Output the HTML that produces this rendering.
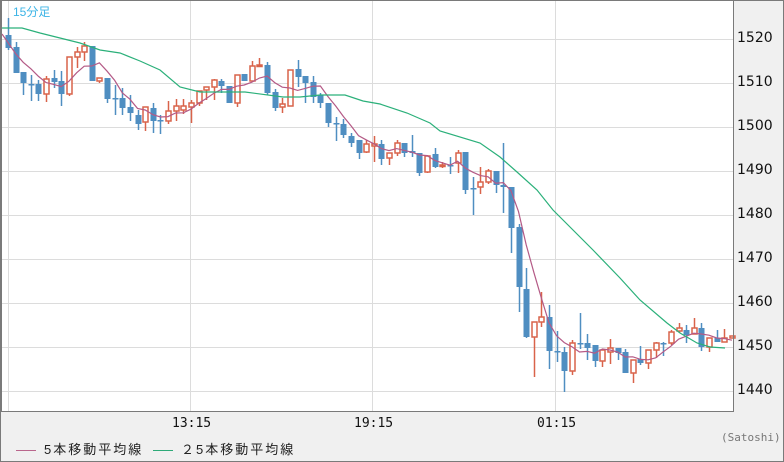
<!DOCTYPE html>
<html><head><meta charset="utf-8"><style>
html,body{margin:0;padding:0;}
body{width:784px;height:462px;background:#f0f0f0;position:relative;overflow:hidden;font-family:"Liberation Sans","Noto Sans CJK JP",sans-serif;}
#frame{position:absolute;left:0;top:0;width:782px;height:460px;border:1px solid #7a7a7a;}
.yl{position:absolute;left:737px;font-size:14px;color:#111;font-family:"DejaVu Sans","Liberation Sans",sans-serif;}
.xl{position:absolute;top:416px;font-size:13px;color:#111;font-family:"DejaVu Sans Mono","Liberation Mono",monospace;}
.lg{position:absolute;top:439px;font-size:13px;color:#222;font-family:"Liberation Sans","Noto Sans CJK JP",sans-serif;letter-spacing:2px;}
</style></head><body>
<div id="frame"></div>
<svg id="c" width="784" height="462" style="position:absolute;left:0;top:0" xmlns="http://www.w3.org/2000/svg"></svg>
<div style="position:absolute;left:13px;top:3px;font-size:12px;color:#3cb4e6;">15分足</div>
<div class="yl" style="top:30px">1520</div>
<div class="yl" style="top:74px">1510</div>
<div class="yl" style="top:118px">1500</div>
<div class="yl" style="top:162px">1490</div>
<div class="yl" style="top:206px">1480</div>
<div class="yl" style="top:250px">1470</div>
<div class="yl" style="top:294px">1460</div>
<div class="yl" style="top:338px">1450</div>
<div class="yl" style="top:382px">1440</div>
<div class="xl" style="left:172px">13:15</div>
<div class="xl" style="left:354px">19:15</div>
<div class="xl" style="left:537px">01:15</div>
<div class="lg" style="left:16px"><span style="display:inline-block;width:20px;height:1px;background:#b9668c;vertical-align:middle;margin-right:8px"></span>5本移動平均線</div>
<div class="lg" style="left:153px"><span style="display:inline-block;width:20px;height:1px;background:#2eaa78;vertical-align:middle;margin-right:8px"></span>２5本移動平均線</div>
<div style="position:absolute;left:721px;top:431px;font-size:11px;color:#777;font-family:'DejaVu Sans Mono',monospace;">(Satoshi)</div>
<script>
var s=document.getElementById('c'),h='';
h+='<rect x="2" y="1" width="731" height="410" fill="#fff"/>';
[39,83,127,171,215,259,303,347,391].forEach(function(y){h+='<line x1="2" x2="733" y1="'+(y+0.5)+'" y2="'+(y+0.5)+'" stroke="#dcdcdc"/>';});
[8,190,372,555].forEach(function(x){h+='<line y1="1" y2="411" x1="'+(x+0.5)+'" x2="'+(x+0.5)+'" stroke="#dcdcdc"/>';});
// [open, close, high, low] in pixel y
var d=[[35,48,18,50],[47,73,42,73],[72,83,72,95],[84,84,75,101],[84,94,80,101],[94,79,76,102],[78,82,70,88],[81,94,71,106],[94,57,57,96],[57,52,47,68],[52,46,42,61],[46,81,46,81],[81,78,78,83],[78,99,78,103],[98,98,85,115],[98,108,88,115],[107,113,95,121],[115,124,110,130],[122,107,107,131],[108,121,103,133],[120,120,115,134],[121,111,101,124],[111,106,99,121],
[110,106,99,114],[107,103,100,123],[103,91,91,106],[90,87,87,100],[87,80,79,100],[81,86,79,93],[86,103,86,103],[103,75,75,107],[74,81,74,81],[81,66,61,81],[66,65,58,66],[65,93,62,95],[92,108,89,111],[107,104,98,113],[106,70,70,106],[69,77,60,87],[76,83,76,103],[82,97,76,103],[95,103,93,108],[103,123,103,127],[123,124,117,141],[124,135,119,138],[136,143,133,147],[140,153,140,159],[152,144,140,153],[146,144,136,162],[144,159,140,165],[158,153,153,165],[153,143,140,156],[143,153,143,157],[151,153,135,157],[153,173,153,176],[172,156,155,173],
[154,167,148,168],[166,165,162,168],[165,165,157,174],[163,153,150,173],[152,190,152,194],[188,188,177,215],[187,182,167,194],[182,171,169,184],[171,185,171,193],[185,187,143,213],[187,228,187,253],[227,287,224,312],[289,337,268,338],[337,322,322,377],[322,317,292,327],[317,351,305,369],[351,352,331,362],[352,371,347,392],[371,343,340,375],[343,343,313,349],[343,348,334,360],[345,361,345,367],[361,350,350,367],[352,348,339,364],[348,353,348,360],[352,373,349,373],[373,360,360,383],[359,363,346,365],[363,350,350,369],[350,343,342,358],[343,343,342,356],[343,332,330,345],[331,328,323,333],[330,335,325,343],[334,328,318,334],[328,347,323,351],[347,338,338,352],[338,342,330,342],[342,338,329,342],[338,336,336,338]];
var cl=[];
d.forEach(function(c,i){var x=8+i*7.62,cx=Math.round(x)+0.5;var up=c[1]<c[0];var col=up?'#d9634a':'#4f8ec1';
h+='<line x1="'+cx+'" x2="'+cx+'" y1="'+c[2]+'" y2="'+c[3]+'" stroke="'+col+'" stroke-width="1.5"/>';
var t=Math.min(c[0],c[1]),b=Math.max(c[0],c[1]);if(b-t<1.5){b=t+1.5;}
if(up)h+='<rect x="'+(cx-2.5)+'" y="'+t+'" width="5" height="'+(b-t)+'" fill="#fff" stroke="'+col+'" stroke-width="1.5"/>';
else h+='<rect x="'+(cx-3)+'" y="'+t+'" width="6" height="'+(b-t)+'" fill="'+col+'"/>';
cl.push(c[1]);});
var p=[];for(var i=0;i<cl.length;i++){var a=0,n=0;for(var j=Math.max(0,i-4);j<=i;j++){a+=cl[j];n++;}if(i<4){a=a/n*0.7+30*0.3*(4-i)/4+a/n*0.3*(i/4);}else a=a/n;p.push((8+i*7.62).toFixed(1)+','+a.toFixed(1));}
p[0]='2,34 '+p[0];
h+='<polyline points="'+p.join(' ')+'" fill="none" stroke="#b45a86" stroke-width="1.2"/>';
h+='<polyline points="2,28 22,28 40,33 60,38 80,43 100,50 120,53 140,61 160,70 180,87 200,92 245,92 283,97 300,97 320,95 345,95 363,101 380,104 407,113 430,123 440,131 480,143 500,157 517,172 537,190 553,210 570,227 593,250 620,278 640,300 667,323 680,333 697,343 710,347 725,348" fill="none" stroke="#2bb07a" stroke-width="1.2"/>';
h+='<line x1="2" x2="733.5" y1="411.5" y2="411.5" stroke="#7a7a7a"/><line x1="733.5" x2="733.5" y1="0" y2="412" stroke="#7a7a7a"/><line x1="1.5" x2="1.5" y1="0" y2="412" stroke="#7a7a7a"/>';
s.innerHTML=h;
</script>
</body></html>
